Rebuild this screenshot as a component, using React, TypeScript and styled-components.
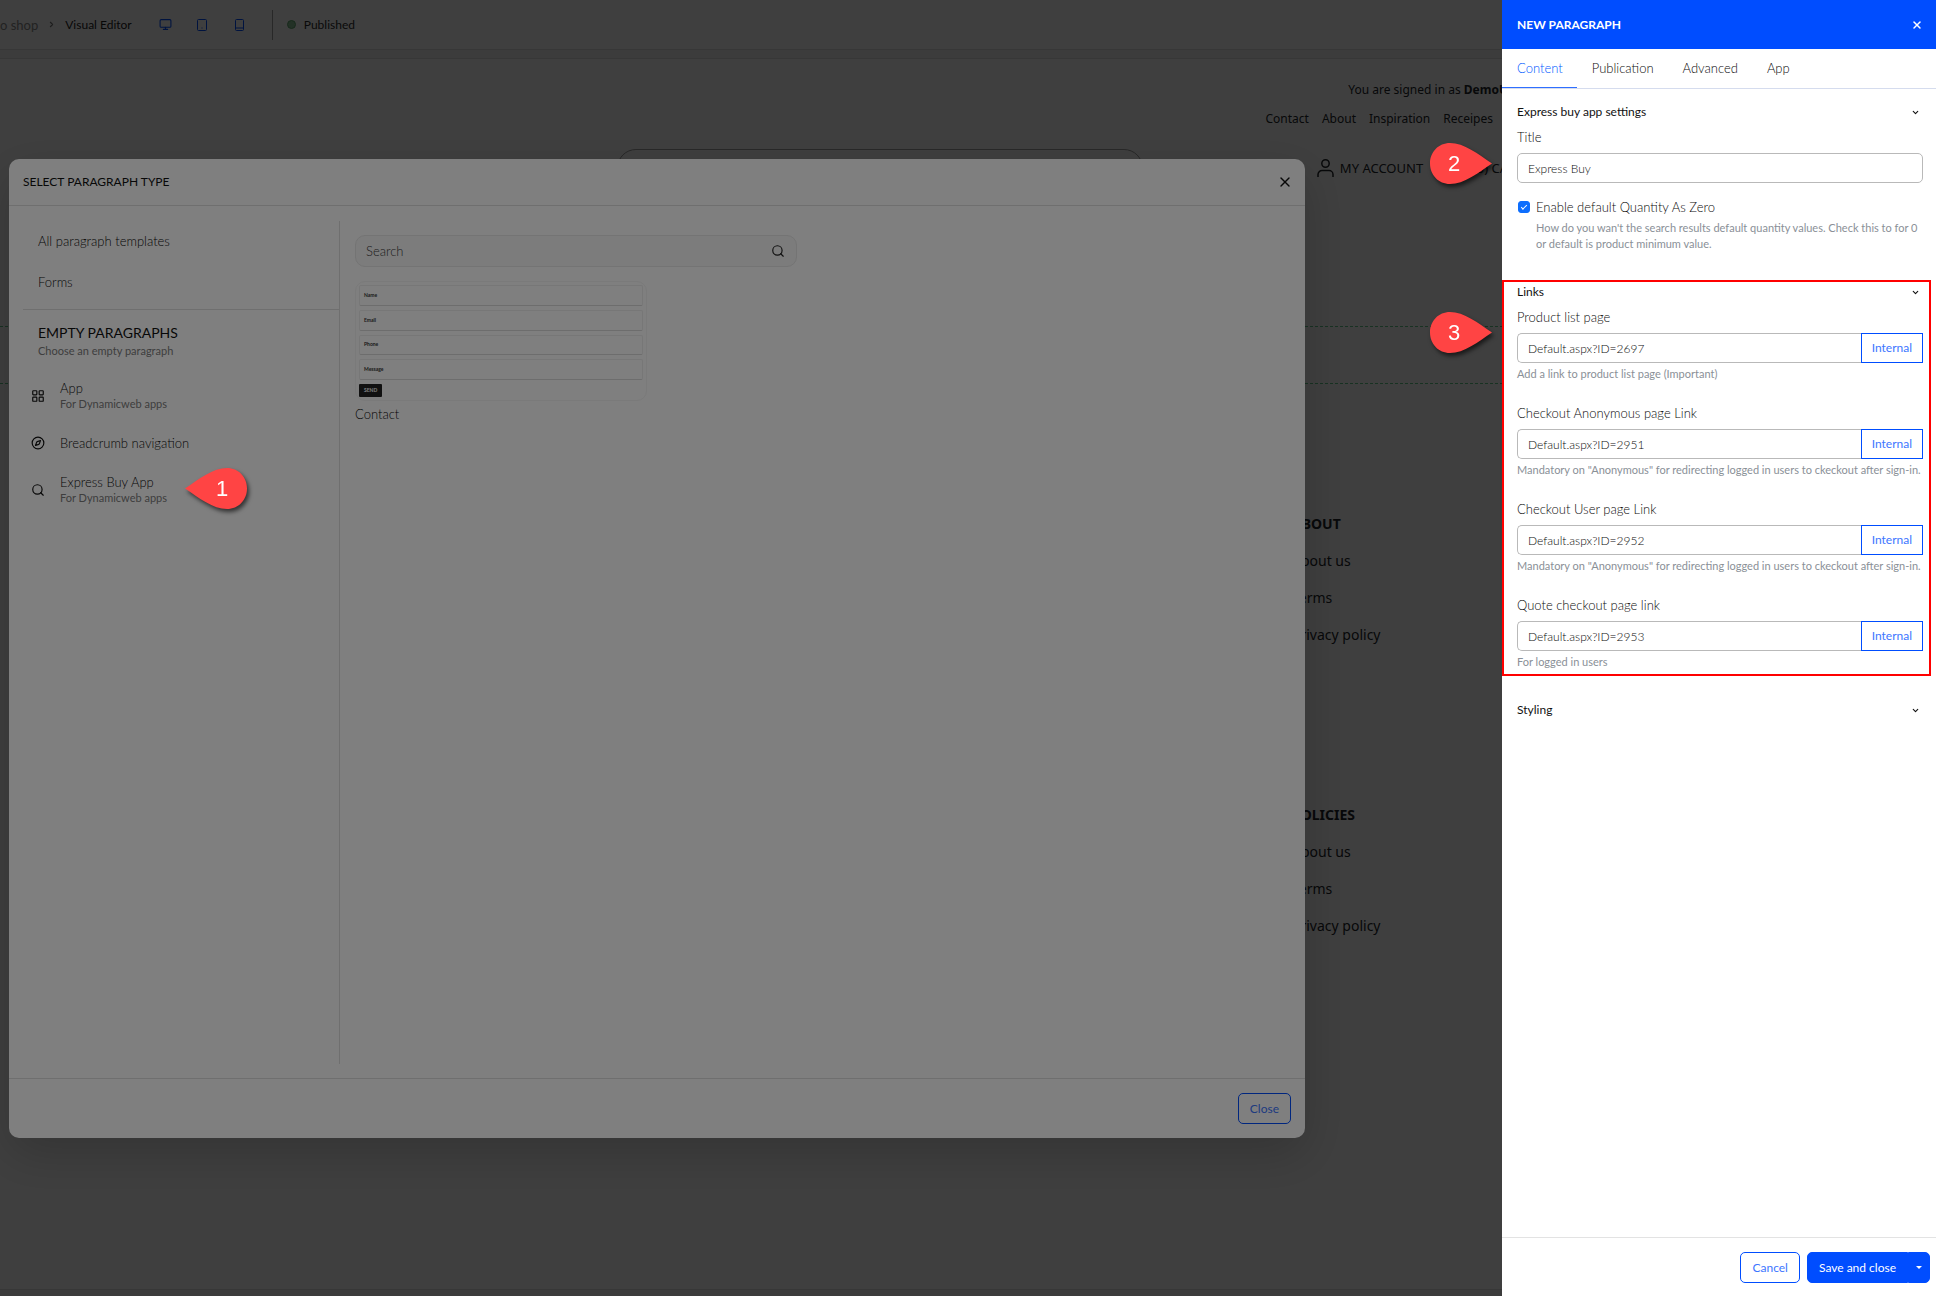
import React, { useState } from "react";
import styled, { createGlobalStyle } from "styled-components";
import { ChevronDown, ChevronRight, Compass, LayoutGrid, Monitor, Search, X } from "lucide-react";

const uiFont = `Lato, "Liberation Sans", sans-serif`;
const siteFont = `"Noto Sans", "Open Sans", sans-serif`;
const blue = "#004dff";

const GlobalStyle = createGlobalStyle`
  *, *::before, *::after { box-sizing: border-box; }
  body { margin: 0; background: #fff; }
  button, input { font: inherit; color: inherit; }
`;

/* ---------- Editor page ---------- */

const Screen = styled.div`
  position: relative;
  display: flex;
  flex-direction: column;
  height: 100vh;
  overflow: hidden;
  background: #f3f3f3;
  font: 300 13px/20px ${uiFont};
  color: #0c0c0c;
`;

const TopBar = styled.header`
  display: flex;
  align-items: center;
  height: 50px;
  flex: none;
  background: #fff;
  border-bottom: 1px solid #dcdcdc;
`;

const Crumbs = styled.nav`
  display: flex;
  align-items: center;
  gap: 9px;
  margin-right: 15px;
  font-weight: 400;
  color: #8a8a8a;
  a { color: inherit; text-decoration: none; }
  svg { color: #777; }
  strong { font-size: 12px; font-weight: 400; color: #1c1c1c; }
`;

const Devices = styled.div`
  display: flex;
  margin-right: 14px;
  color: ${blue};
`;

const DeviceButton = styled.button`
  display: grid;
  place-items: center;
  width: 37px;
  height: 30px;
  padding: 0;
  border: 0;
  background: none;
`;

const Status = styled.div`
  display: flex;
  align-items: center;
  gap: 8px;
  height: 30px;
  padding-left: 14px;
  border-left: 1px solid #a0a0a0;
  font-size: 12px;
  font-weight: 400;
  color: #2b2b2b;
`;

const StatusDot = styled.span`
  width: 9px;
  height: 9px;
  border-radius: 50%;
  background: #8fc79a;
  border: 1px solid #5fa56d;
`;

const Site = styled.main`
  flex: 1;
  margin: 8px 0 6px;
  padding: 20px 428px 0 0;
  background: #fff;
  border: solid #dcdcdc;
  border-width: 1px 0;
  font: 14px/22px ${siteFont};
  color: #212529;
`;

const SiteRow = styled.div<{ $top?: number; $gap?: number; $right?: number }>`
  display: flex;
  justify-content: flex-end;
  align-items: center;
  margin-top: ${(p) => p.$top ?? 0}px;
  gap: ${(p) => p.$gap ?? 0}px;
  padding-right: ${(p) => p.$right ?? 0}px;
  font-size: 12px;
  white-space: pre;
  a { color: inherit; text-decoration: none; }
`;

const HeaderRow = styled(SiteRow)`
  height: 40px;
  font-size: 13px;
`;

const SiteSearch = styled.input`
  flex: 0 1 526px;
  height: 38px;
  margin-right: 174px;
  border: 1px solid #a0a0a0;
  border-radius: 19px;
  background: none;
`;

const AccountLink = styled.a`
  display: flex;
  align-items: center;
  gap: 6px;
  width: 156px;
`;

const DropZone = styled.section`
  height: 58px;
  margin: 138px -10px 0 0;
  border: dashed #60c88a;
  border-width: 1px 0;
`;

const SiteFooter = styled.footer`
  display: flex;
  flex-direction: column;
  align-items: flex-end;
  gap: 158px;
  margin-top: 129px;
`;

const FooterColumn = styled.ul`
  display: flex;
  flex-direction: column;
  gap: 15px;
  width: 216px;
  margin: 0;
  padding: 0;
  list-style: none;
  a { color: inherit; text-decoration: none; }
`;

/* ---------- Paragraph picker ---------- */

const Backdrop = styled.div`
  position: absolute;
  inset: 0;
  background: rgba(0, 0, 0, 0.5);
`;

const ModalLayer = styled(Backdrop)`
  display: flex;
  padding: 159px 631px 158px 9px;
`;

const Modal = styled.section`
  display: flex;
  flex-direction: column;
  flex: 1;
  border-radius: 10px;
  background: #fff;
  box-shadow: 0 16px 48px rgba(0, 0, 0, 0.18);
`;

const ModalHeader = styled.header`
  display: flex;
  align-items: center;
  justify-content: space-between;
  height: 47px;
  padding: 0 12px 0 14px;
  border-bottom: 1px solid #dedede;
  color: #111;
  h2 { margin: 0; font-size: 12px; font-weight: 400; }
`;

const IconButton = styled.button`
  display: grid;
  place-items: center;
  padding: 0;
  border: 0;
  background: none;
`;

const ModalBody = styled.div`
  display: flex;
  flex: 1;
  padding: 15px 14px 14px;
`;

const Sidebar = styled.aside`
  flex: 0 0 317px;
  border-right: 1px solid #dedede;
`;

const TemplateNav = styled.nav`
  display: flex;
  flex-direction: column;
  gap: 21px;
  padding: 10px 15px 17px;
  border-bottom: 1px solid #dedede;
  a { color: inherit; text-decoration: none; }
`;

const EmptyHeading = styled.div`
  padding: 13px 15px 0;
  h3 { margin: 0; font-size: 14px; font-weight: 400; line-height: 20px; color: #111; }
`;

const Small = styled.span`
  display: block;
  font-size: 11px;
  font-weight: 400;
  line-height: 16px;
  color: #7c7c7c;
`;

const TypeList = styled.ul`
  display: flex;
  flex-direction: column;
  gap: 15px;
  margin: 0;
  padding: 21px 8px;
  list-style: none;
`;

const TypeButton = styled.button`
  display: flex;
  align-items: center;
  gap: 15px;
  min-height: 32px;
  padding: 0;
  border: 0;
  background: none;
  text-align: left;
  line-height: 16px;
  svg { color: #111; }
`;

const Templates = styled.div`
  display: flex;
  flex-direction: column;
  align-items: flex-start;
  padding: 14px 15px;
`;

const SearchBox = styled.label`
  display: flex;
  align-items: center;
  width: 442px;
  height: 32px;
  padding: 0 11px 0 10px;
  border: 1px solid #e8e8e8;
  border-radius: 10px;
  background: #f8f8f8;
  color: #222;
  input { flex: 1; padding: 0; border: 0; outline: 0; background: none; }
  input::placeholder { color: #3c3c3c; opacity: 1; }
`;

const TemplateCard = styled.button`
  display: flex;
  flex-direction: column;
  align-items: flex-start;
  gap: 4px;
  width: 292px;
  height: 120px;
  margin: 14px 0 3px;
  padding: 3px;
  border: 1px solid #f4f4f4;
  border-radius: 10px;
  background: none;
  font-size: 5px;
  font-weight: 700;
  line-height: 9px;
  color: #333;
`;

const MiniField = styled.span`
  display: flex;
  align-items: center;
  align-self: stretch;
  height: 21px;
  padding-left: 4px;
  border: 1px solid #efefef;
  border-bottom-color: #dadada;
  border-radius: 2px;
`;

const MiniSend = styled.span`
  padding: 2px 5px;
  border-radius: 1px;
  background: #222;
  color: #fff;
`;

const ModalFooter = styled.footer`
  display: flex;
  justify-content: flex-end;
  padding: 14px;
  border-top: 1px solid #dedede;
`;

const Button = styled.button<{ $filled?: boolean }>`
  height: 31px;
  padding: 0 11px;
  border: 1px solid ${blue};
  border-radius: 5px;
  background: ${(p) => (p.$filled ? blue : "#fff")};
  color: ${(p) => (p.$filled ? "#fff" : "#3d76ff")};
  font-size: 12px;
  font-weight: 400;
  white-space: nowrap;
`;

/* ---------- New paragraph drawer ---------- */

const Drawer = styled.aside`
  position: absolute;
  inset: 0 0 0 auto;
  display: flex;
  flex-direction: column;
  width: 434px;
  background: #fff;
`;

const DrawerHeader = styled.header`
  display: flex;
  align-items: center;
  justify-content: space-between;
  height: 49px;
  padding: 0 13px 0 15px;
  background: ${blue};
  color: #fff;
  h2 { margin: 0; font-size: 12px; font-weight: 700; }
`;

const Tabs = styled.div`
  display: flex;
  height: 40px;
  border-bottom: 1px solid #d5dcee;
`;

const Tab = styled.button<{ $active: boolean }>`
  height: 39px;
  padding: 0 14px 0 15px;
  border: 0;
  border-bottom: 1px solid ${(p) => (p.$active ? "#2f6fff" : "transparent")};
  background: none;
  color: ${(p) => (p.$active ? "#0058ff" : "inherit")};
`;

const DrawerBody = styled.form`
  flex: 1;
  padding: 12px 13px 0 15px;
`;

const Section = styled.section`
  position: relative;
  margin-bottom: 29px;
`;

const SectionToggle = styled.button`
  display: flex;
  align-items: center;
  justify-content: space-between;
  width: 100%;
  height: 22px;
  margin-bottom: 4px;
  padding: 0 3px 0 0;
  border: 0;
  background: none;
  color: #111;
  font-size: 12px;
  font-weight: 400;
`;

const Field = styled.div`
  & + & { margin-top: 21px; }
  label { display: block; margin-bottom: 6px; }
`;

const fieldHeight = 30;

const TextInput = styled.input`
  flex: 1;
  min-width: 0;
  width: 100%;
  height: ${fieldHeight}px;
  padding: 0 10px;
  border: 1px solid #b9b9b9;
  border-radius: 5px;
  background: #fff;
  font-size: 12px;
`;

const LinkGroup = styled.div`
  display: flex;
  ${TextInput} { border-right: 0; border-radius: 5px 0 0 5px; }
  ${Button} { height: ${fieldHeight}px; padding: 0 10px; border-radius: 0; }
`;

const Hint = styled.p`
  margin: 3px 0 0;
  font-size: 11px;
  font-weight: 400;
  line-height: 16px;
  color: #8a9097;
`;

const CheckRow = styled.div`
  display: grid;
  grid-template-columns: 14px 1fr;
  column-gap: 5px;
  align-items: center;
  margin-top: 14px;
  ${Hint} { grid-column: 2; }
`;

const Checkbox = styled.input`
  appearance: none;
  display: grid;
  place-items: center;
  width: 12px;
  height: 12px;
  margin: 0 1px;
  border-radius: 3px;
  border: 1px solid #0d6efd;
  &:checked { background: #0d6efd; }
  &:checked::after {
    content: "";
    width: 6px;
    height: 3px;
    margin-bottom: 2px;
    border: solid #fff;
    border-width: 0 0 1px 1px;
    transform: rotate(-45deg);
  }
`;

const Highlight = styled.div`
  position: absolute;
  inset: -1px -8px -6px -15px;
  border: 2px solid #ff0000;
  pointer-events: none;
`;

const DrawerFooter = styled.footer`
  display: flex;
  justify-content: flex-end;
  gap: 7px;
  padding: 14px 6px 13px;
  border-top: 1px solid #e3e3e3;
`;

const SplitButton = styled.div`
  display: flex;
  ${Button}:first-child { border-radius: 5px 0 0 5px; }
  ${Button}:last-child { display: grid; place-items: center; padding: 0 7px; border-radius: 0 5px 5px 0; }
`;

/* ---------- Numbered callouts ---------- */

const CalloutBox = styled.div<{ $x: string; $y: number }>`
  position: absolute;
  ${(p) => p.$x};
  top: ${(p) => p.$y}px;
  display: grid;
  width: 62px;
  height: 41px;
  color: #fff;
  font: 22px/41px "Liberation Sans", sans-serif;
  filter: drop-shadow(2px 3px 2px rgba(0, 0, 0, 0.6));
  > * { grid-area: 1 / 1; }
`;

const CalloutText = styled.span<{ $left: boolean }>`
  padding: ${(p) => (p.$left ? "0 0 0 12px" : "0 14px 0 0")};
  text-align: center;
  z-index: 1;
`;

function Callout({ n, x, y, pointsLeft = false }: { n: number; x: string; y: number; pointsLeft?: boolean }) {
  return (
    <CalloutBox $x={x} $y={y}>
      <svg width="62" height="41" viewBox="0 0 62 41" fill="#ff4444" aria-hidden="true">
        {pointsLeft ? (
          <path d="M0 20.5C14 11 28 0 42 0C53.5 0 62 9 62 20.5S53.500 41 42 41C28 41 14 30 0 20.500Z" />
        ) : (
          <path d="M62 20.5C48 11 34 0 20 0C8.500 0 0 9 0 20.500S8.500 41 20 41C34 41 48 30 62 20.500Z" />
        )}
      </svg>
      <CalloutText $left={pointsLeft}>{n}</CalloutText>
    </CalloutBox>
  );
}

const DeviceIcon = ({ phone = false }: { phone?: boolean }) => (
  <svg width="12" height="12" viewBox="0 0 12 12" fill="none" stroke="currentColor" aria-hidden="true">
    <rect x={phone ? 2.5 : 1.5} y="0.5" width={phone ? 8 : 9} height="11" rx="1" />
    {phone ? <path d="M2.500 9h8" /> : <path d="M5.500 9h1" />}
  </svg>
);

const UserIcon = () => (
  <svg width="17" height="18" viewBox="0 0 17 18" fill="none" stroke="currentColor" strokeWidth="1.500" aria-hidden="true">
    <circle cx="8.500" cy="4.500" r="3.700" />
    <path d="M1 18v-2.500a4 4 0 0 1 4-4h7a4 4 0 0 1 4 4V18" />
  </svg>
);

const links = [
  { id: "list", label: "Product list page", value: "Default.aspx?ID=2697", hint: "Add a link to product list page (Important)" },
  { id: "anon", label: "Checkout Anonymous page Link", value: "Default.aspx?ID=2951", hint: 'Mandatory on "Anonymous" for redirecting logged in users to ckeckout after sign-in.' },
  { id: "user", label: "Checkout User page Link", value: "Default.aspx?ID=2952", hint: 'Mandatory on "Anonymous" for redirecting logged in users to ckeckout after sign-in.' },
  { id: "quote", label: "Quote checkout page link", value: "Default.aspx?ID=2953", hint: "For logged in users" },
];

const types = [
  { name: "App", note: "For Dynamicweb apps", Icon: LayoutGrid },
  { name: "Breadcrumb navigation", note: "", Icon: Compass },
  { name: "Express Buy App", note: "For Dynamicweb apps", Icon: Search },
];

function SectionHeader({ children }: { children: string }) {
  return (
    <SectionToggle type="button">
      {children}
      <ChevronDown size={9} strokeWidth={3} />
    </SectionToggle>
  );
}

export default function App() {
  const [tab, setTab] = useState("Content");
  return (
    <Screen>
      <GlobalStyle />
      <TopBar>
        <Crumbs>
          <a href="#shop">o shop</a>
          <ChevronRight size={9} strokeWidth={3} />
          <strong>Visual Editor</strong>
        </Crumbs>
        <Devices>
          <DeviceButton aria-label="Desktop"><Monitor size={13} /></DeviceButton>
          <DeviceButton aria-label="Tablet"><DeviceIcon /></DeviceButton>
          <DeviceButton aria-label="Phone"><DeviceIcon phone /></DeviceButton>
        </Devices>
        <Status><StatusDot />Published</Status>
      </TopBar>
      <Site>
        <SiteRow>
          <span>You are signed in as <b>DemoU</b></span>
        </SiteRow>
        <SiteRow $top={7} $gap={13} $right={15}>
          {["Contact", "About", "Inspiration", "Receipes"].map((t) => <a key={t} href="#nav">{t}</a>)}
        </SiteRow>
        <HeaderRow $top={18}>
          <SiteSearch aria-label="Search products" />
          <AccountLink href="#account"><UserIcon />MY ACCOUNT</AccountLink>
          <a href="#cart">(0) CA</a>
        </HeaderRow>
        <DropZone />
        <SiteFooter>
          {["ABOUT", "POLICIES"].map((t) => (
            <FooterColumn key={t}>
              <li><b>{t}</b></li>
              <li><a href="#about">About us</a></li>
              <li><a href="#terms">Terms</a></li>
              <li><a href="#privacy">Privacy policy</a></li>
            </FooterColumn>
          ))}
        </SiteFooter>
      </Site>

      <ModalLayer>
        <Modal role="dialog" aria-label="Select paragraph type">
          <ModalHeader>
            <h2>SELECT PARAGRAPH TYPE</h2>
            <IconButton aria-label="Close dialog"><X size={16} strokeWidth={2} /></IconButton>
          </ModalHeader>
          <ModalBody>
            <Sidebar>
              <TemplateNav>
                <a href="#all">All paragraph templates</a>
                <a href="#forms">Forms</a>
              </TemplateNav>
              <EmptyHeading>
                <h3>EMPTY PARAGRAPHS</h3>
                <Small>Choose an empty paragraph</Small>
              </EmptyHeading>
              <TypeList>
                {types.map(({ name, note, Icon }) => (
                  <li key={name}>
                    <TypeButton>
                      <Icon size={14} />
                      <span>{name}{note && <Small>{note}</Small>}</span>
                    </TypeButton>
                  </li>
                ))}
              </TypeList>
            </Sidebar>
            <Templates>
              <SearchBox>
                <input type="text" placeholder="Search" aria-label="Search templates" />
                <Search size={14} />
              </SearchBox>
              <TemplateCard aria-label="Contact form template">
                {["Name", "Email", "Phone", "Message"].map((t) => <MiniField key={t}>{t}</MiniField>)}
                <MiniSend>SEND</MiniSend>
              </TemplateCard>
              <span>Contact</span>
            </Templates>
          </ModalBody>
          <ModalFooter><Button>Close</Button></ModalFooter>
        </Modal>
      </ModalLayer>

      <Backdrop />
      <Callout n={1} x="left: 185px" y={468} pointsLeft />

      <Drawer>
        <DrawerHeader>
          <h2>NEW PARAGRAPH</h2>
          <IconButton aria-label="Close panel"><X size={12} strokeWidth={3} /></IconButton>
        </DrawerHeader>
        <Tabs role="tablist">
          {["Content", "Publication", "Advanced", "App"].map((t) => (
            <Tab key={t} role="tab" aria-selected={t === tab} $active={t === tab} onClick={() => setTab(t)}>{t}</Tab>
          ))}
        </Tabs>
        <DrawerBody>
          <Section>
            <SectionHeader>Express buy app settings</SectionHeader>
            <Field>
              <label htmlFor="title">Title</label>
              <TextInput id="title" defaultValue="Express Buy" />
            </Field>
            <CheckRow>
              <Checkbox type="checkbox" id="zero" defaultChecked />
              <label htmlFor="zero">Enable default Quantity As Zero</label>
              <Hint>How do you wan't the search results default quantity values. Check this to for 0 or default is product minimum value.</Hint>
            </CheckRow>
          </Section>
          <Section>
            <SectionHeader>Links</SectionHeader>
            {links.map((l) => (
              <Field key={l.id}>
                <label htmlFor={l.id}>{l.label}</label>
                <LinkGroup>
                  <TextInput id={l.id} defaultValue={l.value} />
                  <Button type="button">Internal</Button>
                </LinkGroup>
                <Hint>{l.hint}</Hint>
              </Field>
            ))}
            <Highlight />
          </Section>
          <Section>
            <SectionHeader>Styling</SectionHeader>
          </Section>
        </DrawerBody>
        <DrawerFooter>
          <Button>Cancel</Button>
          <SplitButton>
            <Button $filled>Save and close</Button>
            <Button $filled aria-label="More save options">
              <svg width="6" height="3" viewBox="0 0 6 3" fill="currentColor" aria-hidden="true"><path d="M0 0h6L3 3z" /></svg>
            </Button>
          </SplitButton>
        </DrawerFooter>
        <Callout n={2} x="right: 444px" y={143} />
        <Callout n={3} x="right: 444px" y={312} />
      </Drawer>
    </Screen>
  );
}
